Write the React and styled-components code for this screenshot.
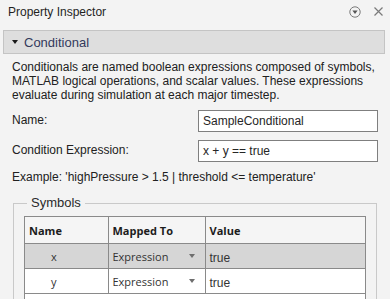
import React from 'react';
import styled, { createGlobalStyle } from 'styled-components';

const GlobalStyle = createGlobalStyle`
  html, body {
    margin: 0;
    padding: 0;
    background: #f3f3f3;
    overflow: hidden;
  }
  body {
    font-family: "Liberation Sans", Arial, sans-serif;
    font-size: 12px;
    color: #212121;
  }
`;

const Panel = styled.div`
  width: 390px;
  height: 299px;
  overflow: hidden;
  background: #f3f3f3;
`;

const TitleBar = styled.div`
  display: flex;
  align-items: center;
  justify-content: space-between;
  height: 23px;
  padding: 0 7px 0 8px;
  color: #1f1f1f;
`;

const TitleIcons = styled.div`
  display: flex;
  align-items: center;
  gap: 13px;
  color: #7a7a7a;
`;

const Section = styled.div`
  margin: 7px 5px 0 3px;
`;

const SectionHeader = styled.div`
  display: flex;
  align-items: center;
  gap: 6px;
  height: 22px;
  padding-left: 8px;
  background: #dedede;
  border: 1px solid #c4c4c4;
  font-size: 13px;
  color: #343a5c;
`;

const Caret = styled.span`
  width: 0;
  height: 0;
  border-left: 3.5px solid transparent;
  border-right: 3.5px solid transparent;
  border-top: 4px solid #1a1a1a;
`;

const Description = styled.p`
  margin: 6px 0 0;
  padding: 0 6px 0 9px;
  line-height: 14px;
`;

const Form = styled.div`
  display: grid;
  grid-template-columns: 186px 180px;
  row-gap: 8px;
  margin-top: 8px;
  padding-left: 9px;
`;

const Label = styled.label`
  padding-top: 3px;
`;

const Input = styled.div`
  box-sizing: border-box;
  height: 22px;
  padding: 0 4px;
  display: flex;
  align-items: center;
  background: #ffffff;
  border: 1px solid #7f7f7f;
  color: #262626;
`;

const Example = styled.div`
  margin-top: 8px;
  padding-left: 9px;
  line-height: 14px;
`;

const Group = styled.fieldset`
  margin: 11px 8px 0 10px;
  padding: 5px 10px 0 10px;
  border: 1px solid #c9c9c9;
  border-bottom: none;
`;

const Legend = styled.legend`
  margin-left: 3px;
  padding: 0 4px;
  font-size: 13px;
  line-height: 16px;
  color: #2a2a2a;
`;

const TableBox = styled.div`
  background: #ffffff;
  border: 1px solid #8a8a8a;
  border-bottom: none;
  height: 120px;
`;

const Table = styled.table`
  border-collapse: collapse;
  width: 100%;
  table-layout: fixed;
  font-family: "Open Sans", "Noto Sans", sans-serif;
  font-size: 11px;
`;

const HeadCell = styled.th`
  height: 26px;
  padding: 0 4px;
  text-align: left;
  font-weight: 700;
  color: #1c1c1c;
  background: #f5f5f5;
  border-right: 1px solid #8a8a8a;
  border-bottom: 1px solid #8a8a8a;
  &:last-child {
    border-right: none;
  }
`;

const Row = styled.tr`
  background: ${(props) => (props.selected ? '#d6d6d6' : '#ffffff')};
`;

const Cell = styled.td`
  height: 21px;
  padding: 0 4px;
  color: #333333;
  border-right: 1px solid #8a8a8a;
  border-bottom: 1px solid #8a8a8a;
  &:last-child {
    border-right: none;
  }
`;

const NameCell = styled(Cell)`
  padding: 0 0 0 26px;
`;

const ValueCell = styled(Cell)`
  padding: 3px 4px 0;
  font-family: "Liberation Sans", Arial, sans-serif;
  font-size: 12px;
`;

const Select = styled.div`
  display: flex;
  align-items: center;
  justify-content: space-between;
  padding-right: 6px;
`;

const DropArrow = styled.span`
  width: 0;
  height: 0;
  border-left: 3.5px solid transparent;
  border-right: 3.5px solid transparent;
  border-top: 4px solid #6e6e6e;
`;

function MinimizeIcon() {
  return (
    <svg width="12" height="12" viewBox="0 0 12 12">
      <circle cx="6" cy="6" r="5.2" fill="none" stroke="currentColor" strokeWidth="1" />
      <path d="M3.4 4.6 L8.6 4.6 L6 7.9 Z" fill="#555" />
    </svg>
  );
}

function CloseIcon() {
  return (
    <svg width="9" height="9" viewBox="0 0 9 9">
      <path d="M0.5 0.5 L8.5 8.5 M8.5 0.5 L0.5 8.5" stroke="currentColor" strokeWidth="1.2" />
    </svg>
  );
}

const symbols = [
  { name: 'x', mapped: 'Expression', value: 'true', selected: true },
  { name: 'y', mapped: 'Expression', value: 'true', selected: false },
];

export default function App() {
  return (
    <Panel>
      <GlobalStyle />
      <TitleBar>
        <span>Property Inspector</span>
        <TitleIcons>
          <MinimizeIcon />
          <CloseIcon />
        </TitleIcons>
      </TitleBar>
      <Section>
        <SectionHeader>
          <Caret />
          Conditional
        </SectionHeader>
        <Description>
          Conditionals are named boolean expressions composed of symbols,
          MATLAB logical operations, and scalar values. These expressions
          evaluate during simulation at each major timestep.
        </Description>
        <Form>
          <Label>Name:</Label>
          <Input>SampleConditional</Input>
          <Label>Condition Expression:</Label>
          <Input>x + y == true</Input>
        </Form>
        <Example>Example: 'highPressure &gt; 1.5 | threshold &lt;= temperature'</Example>
        <Group>
          <Legend>Symbols</Legend>
          <TableBox>
            <Table>
              <colgroup>
                <col style={{ width: 83 }} />
                <col style={{ width: 97 }} />
                <col />
              </colgroup>
              <thead>
                <tr>
                  <HeadCell>Name</HeadCell>
                  <HeadCell>Mapped To</HeadCell>
                  <HeadCell>Value</HeadCell>
                </tr>
              </thead>
              <tbody>
                {symbols.map((s) => (
                  <Row key={s.name} selected={s.selected}>
                    <NameCell>{s.name}</NameCell>
                    <Cell>
                      <Select>
                        {s.mapped}
                        <DropArrow />
                      </Select>
                    </Cell>
                    <ValueCell>{s.value}</ValueCell>
                  </Row>
                ))}
              </tbody>
            </Table>
          </TableBox>
        </Group>
      </Section>
    </Panel>
  );
}
